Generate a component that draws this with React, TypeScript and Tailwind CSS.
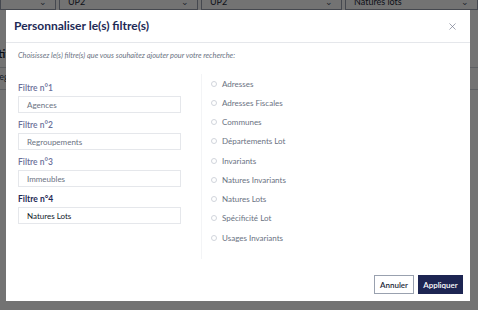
import { X } from 'lucide-react';

const FILTRES = [
  { label: 'Filtre n°1', value: 'Agences', active: false },
  { label: 'Filtre n°2', value: 'Regroupements', active: false },
  { label: 'Filtre n°3', value: 'Immeubles', active: false },
  { label: 'Filtre n°4', value: 'Natures Lots', active: true },
];

const OPTIONS = [
  'Adresses',
  'Adresses Fiscales',
  'Communes',
  'Départements Lot',
  'Invariants',
  'Natures Invariants',
  'Natures Lots',
  'Spécificité Lot',
  'Usages Invariants',
];

function Select({ text, className }: { text: string; className: string }) {
  return (
    <div className={`h-[30px] border border-gray-400 bg-white flex items-end justify-between px-2 pb-[1px] text-[9px] text-gray-800 ${className}`}>
      <span>{text}</span>
      <span className="text-[9px] text-gray-600">⌄</span>
    </div>
  );
}

export default function App() {
  return (
    <div
      className="relative w-[478px] h-[310px] overflow-hidden bg-white"
      style={{ fontFamily: 'Lato, "Open Sans", sans-serif' }}
    >
      {/* page derrière */}
      <div className="flex gap-[3px] -mt-[20px]">
        <Select text="" className="w-[56px]" />
        <Select text="UP2" className="w-[139px]" />
        <Select text="UP2" className="w-[141px]" />
        <Select text="Natures lots" className="w-[133px]" />
      </div>
      <div className="mt-[36px] -ml-[14px] text-[11px] font-bold text-gray-900 border-b border-gray-300 pb-1">Entité</div>
      <div className="-ml-[6px] text-[9px] text-gray-700 mt-[2px] border-b border-gray-300 pb-[6px]">Regroupement</div>

      {/* overlay */}
      <div className="absolute inset-0 bg-black/55" />

      {/* modale */}
      <div className="absolute left-[6px] top-[10px] w-[464px] h-[291px] bg-white flex flex-col">
        <div className="h-[33px] px-[8px] flex items-center justify-between border-b border-gray-200 shrink-0">
          <h1 className="text-[12px] font-bold text-[#1e2a55]">Personnaliser le(s) filtre(s)</h1>
          <X size={11} strokeWidth={1.4} className="text-[#6b7085] mr-[4px]" />
        </div>

        <div className="flex-1 px-[12px] flex flex-col">
          <p className="mt-[8px] text-[7.4px] italic text-gray-500 leading-[10px]">
            Choisissez le(s) filtre(s) que vous souhaitez ajouter pour votre recherche:
          </p>

          <div className="flex mt-[13px]">
            <div className="w-[163px] pt-[8px] flex flex-col">
              {FILTRES.map((f) => (
                <div key={f.label} className="mb-[6px]">
                  <div
                    className={`h-[12px] leading-[12px] text-[8.5px] mb-[2px] ${
                      f.active ? 'font-bold text-[#1e2a55]' : 'font-semibold text-[#6a7099]'
                    }`}
                  >
                    {f.label}
                  </div>
                  <div
                    className={`h-[17px] border border-gray-200 flex items-center pl-[8px] text-[8px] ${
                      f.active ? 'text-gray-900' : 'text-gray-500'
                    }`}
                  >
                    {f.value}
                  </div>
                </div>
              ))}
            </div>

            <div className="ml-[20px] h-[185px] border-l border-gray-100 pl-[9px]">
              {OPTIONS.map((o) => (
                <div key={o} className="h-[19.25px] flex items-center gap-[5px] text-[8px] text-gray-500">
                  <span className="w-[6px] h-[6px] rounded-full border border-gray-300" />
                  {o}
                </div>
              ))}
            </div>
          </div>
        </div>

        <div className="flex justify-end gap-[4px] pr-[7px] pb-[7px]">
          <button className="h-[19px] w-[40px] border border-gray-400 text-[8px] font-semibold text-gray-800">
            Annuler
          </button>
          <button className="h-[19px] w-[45px] bg-[#1d2552] text-[8px] font-semibold text-white">
            Appliquer
          </button>
        </div>
      </div>
    </div>
  );
}
